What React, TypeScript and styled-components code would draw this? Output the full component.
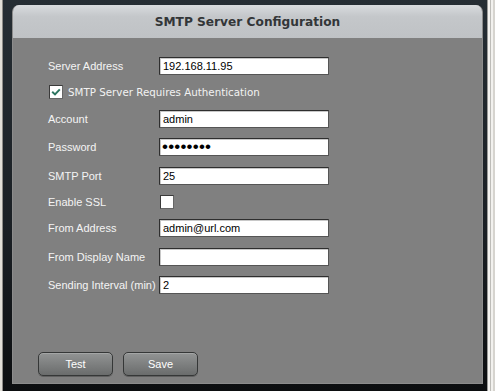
import { useState } from "react";
import styled, { createGlobalStyle } from "styled-components";

const GlobalStyle = createGlobalStyle`
  html, body {
    margin: 0;
    padding: 0;
    width: 495px;
    height: 391px;
    overflow: hidden;
    background: #1b2026;
  }
  * {
    box-sizing: border-box;
  }
`;

const Screen = styled.div`
  display: flex;
  width: 495px;
  height: 391px;
`;

const LeftEdge = styled.div`
  width: 3px;
  background: linear-gradient(to right, #e2dfd8 0 2px, #8e8c88 2px);
`;

const RightEdge = styled.div`
  width: 8px;
  background: linear-gradient(
    to right,
    #9a9a98 0 1px,
    #f4f3f0 1px 3px,
    #bdbcb8 3px 4px,
    #f2f1ee 4px 6px,
    #d6d4cf 6px
  );
`;

const Frame = styled.div`
  flex: 1;
  display: flex;
  padding: 5px 4px 7px 9px;
  background: linear-gradient(to bottom, #262e34 0%, #1a1f24 60%, #0c0e10 100%);
`;

const Panel = styled.div`
  flex: 1;
  display: flex;
  flex-direction: column;
  border-radius: 7px 7px 0 0;
  overflow: hidden;
  background: #808080;
  border: 1px solid #8c8c8c;
  border-top: 0;
`;

const Header = styled.div`
  height: 33px;
  display: flex;
  align-items: center;
  justify-content: center;
  background: linear-gradient(to bottom, #d8dbde 0%, #c4c7ca 35%, #bfc2c5 100%);
`;

const Title = styled.h1`
  margin: 0;
  font-family: "DejaVu Sans", Verdana, sans-serif;
  font-size: 12.2px;
  font-weight: bold;
  color: #333638;
`;

const Body = styled.div`
  flex: 1;
  display: flex;
  flex-direction: column;
  padding: 19px 0 7px 25px;
`;

const Form = styled.div`
  display: grid;
  grid-template-columns: 111px 170px;
  row-gap: 10.4px;
  align-items: center;
  padding-left: 10px;
`;

const Label = styled.label`
  font-family: "Liberation Sans", Arial, sans-serif;
  font-size: 11px;
  color: #f4f4f4;
`;

const TextInput = styled.input<{ $secret?: boolean }>`
  width: 170px;
  height: 18px;
  padding: 0 ${(p) => (p.$secret ? "2px" : "3px")};
  border: 1px solid #2e2e2e;
  border-right-color: #555;
  border-bottom-color: #555;
  box-shadow: inset 1px 1px 0 #c8c8c8;
  background: #fff;
  font-family: "Liberation Sans", Arial, sans-serif;
  font-size: ${(p) => (p.$secret ? "17px" : "11px")};
  letter-spacing: ${(p) => (p.$secret ? "0.2px" : "normal")};
  color: #000;
  outline: none;
`;

const CheckRow = styled.div<{ $span?: boolean }>`
  display: flex;
  align-items: center;
  gap: 5px;
  height: 14px;
  grid-column: ${(p) => (p.$span ? "1 / span 2" : "auto")};
  padding-left: 1px;
`;

const CheckBox = styled.span`
  width: 14px;
  height: 14px;
  display: flex;
  align-items: center;
  justify-content: center;
  background: #fff;
  border: 1px solid #3a3a3a;
  border-right-color: #666;
  border-bottom-color: #666;
`;

const CheckText = styled.span`
  font-family: "DejaVu Sans", Verdana, sans-serif;
  font-size: 10.3px;
  color: #f2f2f2;
`;

const Spacer = styled.div`
  flex: 1;
`;

const ButtonRow = styled.div`
  display: flex;
  gap: 10px;
`;

const Button = styled.button`
  width: 75px;
  height: 24px;
  border: 1px solid #353737;
  border-radius: 5px;
  background: linear-gradient(to bottom, #929494 0%, #7e8080 50%, #6a6c6c 100%);
  box-shadow: inset 0 1px 0 rgba(255, 255, 255, 0.18), 0 1px 0 rgba(0, 0, 0, 0.25);
  font-family: "Liberation Sans", Arial, sans-serif;
  font-size: 11px;
  color: #fff;
  padding: 0;
  cursor: pointer;
`;

type Field = { label: string; value: string; secret?: boolean };

const fields1: Field[] = [
  { label: "Account", value: "admin" },
  { label: "Password", value: "12345678", secret: true },
  { label: "SMTP Port", value: "25" },
];

const fields2: Field[] = [
  { label: "From Address", value: "admin@url.com" },
  { label: "From Display Name", value: "" },
  { label: "Sending Interval (min)", value: "2" },
];

const Check = ({ on }: { on: boolean }) => (
  <CheckBox>
    {on && (
      <svg width="10" height="8" viewBox="0 0 10 8">
        <path d="M1.2 3.8 L4 6.4 L8.8 1.4" fill="none" stroke="#2c7560" strokeWidth="2" />
      </svg>
    )}
  </CheckBox>
);

const Row = ({ f }: { f: Field }) => (
  <>
    <Label>{f.label}</Label>
    <TextInput
      type={f.secret ? "password" : "text"}
      $secret={f.secret}
      defaultValue={f.value}
    />
  </>
);

export default function App() {
  const [auth, setAuth] = useState(true);
  const [ssl, setSsl] = useState(false);
  return (
    <>
      <GlobalStyle />
      <Screen>
        <LeftEdge />
        <Frame>
          <Panel>
            <Header>
              <Title>SMTP Server Configuration</Title>
            </Header>
            <Body>
              <Form>
                <Label>Server Address</Label>
                <TextInput defaultValue="192.168.11.95" />
                <CheckRow $span onClick={() => setAuth(!auth)}>
                  <Check on={auth} />
                  <CheckText>SMTP Server Requires Authentication</CheckText>
                </CheckRow>
                {fields1.map((f) => (
                  <Row key={f.label} f={f} />
                ))}
                <Label>Enable SSL</Label>
                <CheckRow onClick={() => setSsl(!ssl)}>
                  <Check on={ssl} />
                </CheckRow>
                {fields2.map((f) => (
                  <Row key={f.label} f={f} />
                ))}
              </Form>
              <Spacer />
              <ButtonRow>
                <Button>Test</Button>
                <Button>Save</Button>
              </ButtonRow>
            </Body>
          </Panel>
        </Frame>
        <RightEdge />
      </Screen>
    </>
  );
}
